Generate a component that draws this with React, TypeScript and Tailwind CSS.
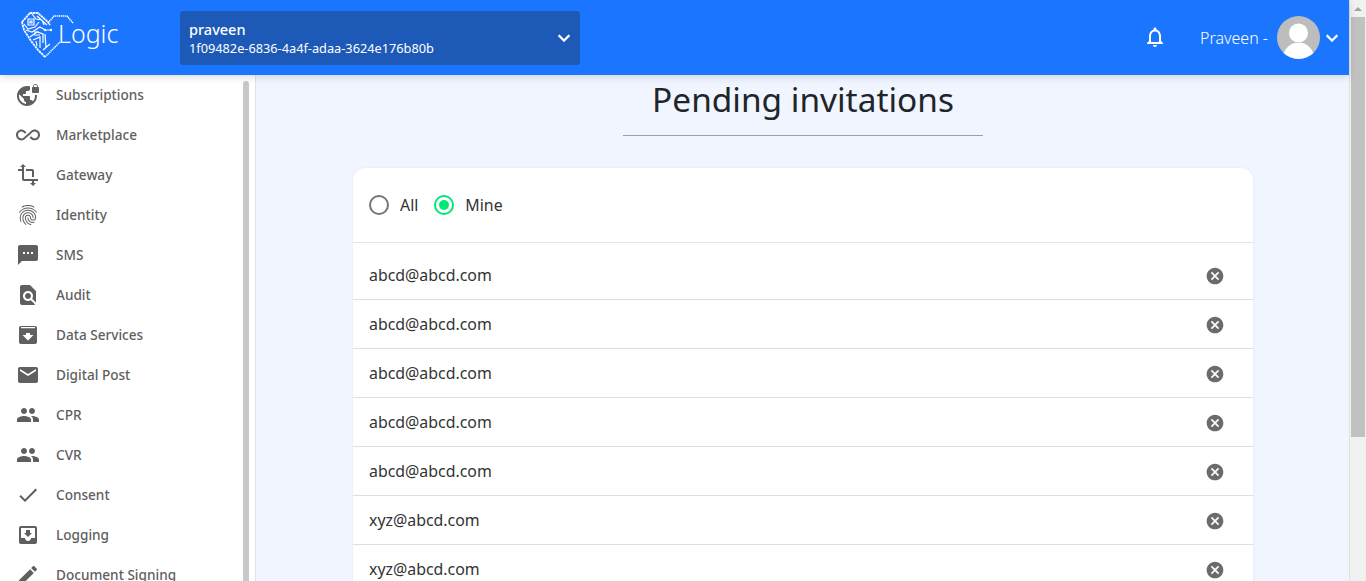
import React from 'react';

const icons = {
  vpn: 'M22 4v-.5C22 2.12 20.88 1 19.5 1S17 2.12 17 3.5V4c-.55 0-1 .45-1 1v4c0 .55.45 1 1 1h5c.55 0 1-.45 1-1V5c0-.55-.45-1-1-1zm-.8 0h-3.4v-.5c0-.94.76-1.7 1.7-1.7s1.7.76 1.7 1.7V4zm-2.28 8c.04.33.08.66.08 1 0 2.08-.8 3.97-2.1 5.39-.26-.81-1-1.39-1.9-1.39h-1v-3c0-.55-.45-1-1-1H7v-2h2c.55 0 1-.45 1-1V8h2c1.1 0 2-.9 2-2V3.46c-.95-.3-1.95-.46-3-.46C5.48 3 1 7.48 1 13s4.48 10 10 10 10-4.48 10-10c0-.34-.02-.67-.05-1h-2.03zM10 20.93c-3.95-.49-7-3.85-7-7.93 0-.62.08-1.21.21-1.79L8 16v1c0 1.1.9 2 2 2v1.93z',
  infinity: 'M18.6 6.62c-1.44 0-2.8.56-3.77 1.53L12 10.66 10.48 12h.01L7.8 14.39c-.64.64-1.49.99-2.4.99-1.87 0-3.39-1.51-3.39-3.38S3.53 8.62 5.4 8.62c.91 0 1.76.35 2.44 1.03l1.13 1 1.51-1.34L9.22 8.2C8.2 7.18 6.84 6.62 5.4 6.62 2.42 6.62 0 9.04 0 12s2.42 5.38 5.4 5.38c1.44 0 2.8-.56 3.77-1.53l2.83-2.5.01.01L13.52 12h-.01l2.69-2.39c.64-.64 1.49-.99 2.4-.99 1.87 0 3.39 1.51 3.39 3.38s-1.52 3.38-3.39 3.38c-.9 0-1.76-.35-2.44-1.03l-1.14-1.01-1.51 1.34 1.27 1.12c1.02 1.01 2.37 1.57 3.82 1.57 2.98 0 5.4-2.41 5.4-5.38s-2.42-5.37-5.4-5.37z',
  transform: 'M22 18v-2H8V4h2L7 1 4 4h2v2H2v2h4v8c0 1.1.9 2 2 2h8v2h-2l3 3 3-3h-2v-2h4zM10 8h6v6h2V8c0-1.1-.9-2-2-2h-6v2z',
  fingerprint: 'M17.81 4.47c-.08 0-.16-.02-.23-.06C15.66 3.42 14 3 12.01 3c-1.98 0-3.86.47-5.57 1.41-.24.13-.54.04-.68-.2-.13-.24-.04-.55.2-.68C7.82 2.52 9.86 2 12.01 2c2.13 0 3.99.47 6.03 1.52.25.13.34.43.21.67-.09.18-.26.28-.44.28zM3.5 9.72c-.1 0-.2-.03-.29-.09-.23-.16-.28-.47-.12-.7.99-1.4 2.25-2.5 3.75-3.27C9.98 4.04 14 4.03 17.15 5.65c1.5.77 2.76 1.86 3.75 3.25.16.22.11.54-.12.7-.23.16-.54.11-.7-.12-.9-1.26-2.04-2.25-3.39-2.94-2.87-1.47-6.54-1.47-9.4.01-1.36.7-2.5 1.7-3.4 2.96-.08.14-.23.21-.39.21zm6.25 12.07c-.13 0-.26-.05-.35-.15-.87-.87-1.34-1.43-2.01-2.64-.69-1.23-1.05-2.73-1.05-4.34 0-2.97 2.54-5.39 5.66-5.39s5.66 2.42 5.66 5.39c0 .28-.22.5-.5.5s-.5-.22-.5-.5c0-2.42-2.09-4.39-4.66-4.39-2.57 0-4.66 1.97-4.66 4.39 0 1.44.32 2.77.93 3.85.64 1.15 1.08 1.64 1.85 2.42.19.2.19.51 0 .71-.11.1-.24.15-.37.15zm7.17-1.85c-1.19 0-2.24-.3-3.1-.89-1.49-1.01-2.38-2.65-2.38-4.39 0-.28.22-.5.5-.5s.5.22.5.5c0 1.41.72 2.74 1.94 3.56.71.48 1.54.71 2.54.71.24 0 .64-.03 1.04-.1.27-.05.53.13.58.41.05.27-.13.53-.41.58-.57.11-1.07.12-1.21.12zM14.91 22c-.04 0-.09-.01-.13-.02-1.59-.44-2.63-1.03-3.72-2.1-1.4-1.39-2.17-3.24-2.17-5.22 0-1.62 1.38-2.94 3.08-2.94 1.7 0 3.08 1.32 3.08 2.94 0 1.07.93 1.94 2.08 1.94s2.08-.87 2.08-1.94c0-3.77-3.25-6.83-7.25-6.83-2.84 0-5.44 1.58-6.61 4.03-.39.81-.59 1.76-.59 2.8 0 .78.07 2.01.67 3.61.1.26-.03.55-.29.64-.26.1-.55-.04-.64-.29-.49-1.31-.73-2.61-.73-3.96 0-1.2.23-2.29.68-3.24 1.33-2.79 4.28-4.6 7.51-4.6 4.55 0 8.25 3.51 8.25 7.83 0 1.62-1.38 2.94-3.08 2.94s-3.08-1.32-3.08-2.94c0-1.07-.93-1.94-2.08-1.94s-2.08.87-2.08 1.94c0 1.71.66 3.31 1.87 4.51.95.94 1.86 1.46 3.27 1.85.27.07.42.35.35.61-.05.23-.26.38-.47.38z',
  sms: 'M20 2H4c-1.1 0-1.99.9-1.99 2L2 22l4-4h14c1.1 0 2-.9 2-2V4c0-1.1-.9-2-2-2zM9 11H7V9h2v2zm4 0h-2V9h2v2zm4 0h-2V9h2v2z',
  audit: 'M20 19.59V8l-6-6H6c-1.1 0-1.99.9-1.99 2L4 20c0 1.1.89 2 1.99 2H18c.45 0 .85-.15 1.19-.4l-4.43-4.43c-.8.52-1.74.83-2.76.83-2.76 0-5-2.24-5-5s2.24-5 5-5 5 2.24 5 5c0 1.02-.31 1.96-.83 2.75L20 19.59zM9 13c0 1.66 1.34 3 3 3s3-1.34 3-3-1.34-3-3-3-3 1.34-3 3z',
  archive: 'M5 3h14c1.1 0 2 .9 2 2v14c0 1.1-.9 2-2 2H5c-1.1 0-2-.9-2-2V5c0-1.1.9-2 2-2zm0 1v1.2h14V4H5zm7 13.5l5.5-5.5H14v-2h-4v2H6.500L12 17.500z',
  email: 'M20 4H4c-1.1 0-1.99.9-1.99 2L2 18c0 1.1.9 2 2 2h16c1.1 0 2-.9 2-2V6c0-1.1-.9-2-2-2zm0 4l-8 5-8-5V6l8 5 8-5v2z',
  people: 'M16 11c1.66 0 2.99-1.34 2.99-3S17.66 5 16 5c-1.66 0-3 1.34-3 3s1.34 3 3 3zm-8 0c1.66 0 2.99-1.34 2.99-3S9.66 5 8 5C6.34 5 5 6.34 5 8s1.34 3 3 3zm0 2c-2.33 0-7 1.17-7 3.5V19h14v-2.5c0-2.33-4.67-3.5-7-3.5zm8 0c-.29 0-.62.02-.97.05 1.16.84 1.97 1.97 1.97 3.45V19h6v-2.5c0-2.33-4.67-3.5-7-3.5z',
  done: 'M9 16.2L4.8 12l-1.4 1.4L9 19 21 7l-1.4-1.4L9 16.2z',
  inbox: 'M19 3H4.99c-1.11 0-1.98.9-1.98 2L3 19c0 1.1.88 2 1.99 2H19c1.1 0 2-.9 2-2V5c0-1.1-.9-2-2-2zm0 12h-4c0 1.66-1.35 3-3 3s-3-1.34-3-3H4.99V5H19v10zm-3-5h-2V7h-4v3H8l4 4 4-4z',
  edit: 'M3 17.25V21h3.75L17.81 9.94l-3.75-3.75L3 17.25zM20.71 7.04c.39-.39.39-1.02 0-1.41l-2.34-2.34c-.39-.39-1.02-.39-1.41 0l-1.83 1.83 3.75 3.75 1.83-1.83z',
  cancel: 'M12 2C6.47 2 2 6.47 2 12s4.47 10 10 10 10-4.47 10-10S17.53 2 12 2zm5 13.59L15.59 17 12 13.41 8.41 17 7 15.59 10.59 12 7 8.41 8.41 7 12 10.59 15.59 7 17 8.41 13.41 12 17 15.59z',
  bell: 'M12 22c1.1 0 2-.9 2-2h-4c0 1.1.9 2 2 2zm6-6v-5c0-3.07-1.63-5.64-4.5-6.32V4c0-.83-.67-1.5-1.5-1.5s-1.5.67-1.5 1.5v.68C7.64 5.36 6 7.92 6 11v5l-2 2v1h16v-1l-2-2zm-2 1H8v-6c0-2.48 1.51-4.5 4-4.5s4 2.02 4 4.5v6z',
};

const menu = [
  { label: 'Subscriptions', icon: icons.vpn },
  { label: 'Marketplace', icon: icons.infinity },
  { label: 'Gateway', icon: icons.transform },
  { label: 'Identity', icon: icons.fingerprint },
  { label: 'SMS', icon: icons.sms },
  { label: 'Audit', icon: icons.audit },
  { label: 'Data Services', icon: icons.archive },
  { label: 'Digital Post', icon: icons.email },
  { label: 'CPR', icon: icons.people },
  { label: 'CVR', icon: icons.people },
  { label: 'Consent', icon: icons.done },
  { label: 'Logging', icon: icons.inbox },
  { label: 'Document Signing', icon: icons.edit },
];

const invitations = [
  'abcd@abcd.com',
  'abcd@abcd.com',
  'abcd@abcd.com',
  'abcd@abcd.com',
  'abcd@abcd.com',
  'xyz@abcd.com',
  'xyz@abcd.com',
];

const Chevron = () => (
  <svg className="w-[24px] h-[24px] shrink-0" viewBox="0 0 24 24" fill="currentColor">
    <path d="M7.41 8.59L12 13.17l4.59-4.58L18 10l-6 6-6-6 1.41-1.41z" stroke="currentColor" strokeWidth="0.3" />
  </svg>
);

// heart shaped circuit logo, the right half is only a dotted outline
const Logo = () => (
  <svg className="w-[56px] h-[50px] shrink-0 mb-[5px]" viewBox="0 0 56 50" fill="none" stroke="white">
    <path d="M28 13L34 6H47L53 13" strokeWidth="1.5" strokeDasharray="1.4 0.6" />
    <path d="M25 47L40 32" strokeWidth="1.5" strokeDasharray="1.4 0.6" />
    <path d="M2 12L10 3H18L28 12L30 15" strokeWidth="1.8" strokeDasharray="2.5 0.5" />
    <path d="M2 12L4 20L11 31L18 40L25 47" strokeWidth="1.8" strokeDasharray="2.5 0.6" />
    <g strokeWidth="1.2">
      <path d="M8 9H14V15H8ZM10 11H12V13H10Z" />
      <path d="M12 4L16 9L22 10L24 15M17 6L27 15" />
      <path d="M4 14L8 19L15 17L19 12M6 20L12 22L20 17L25 20L31 20" />
      <path d="M10 27L17 22L23 24L23 33M13 30L20 27L20 38M17 36L16 31M25 24L26 38M23 40L30 34" />
      <path d="M14 22H19M14 25H20" />
    </g>
    <circle cx="31" cy="20" r="1.2" fill="white" stroke="none" />
    <circle cx="25" cy="20" r="1.2" fill="white" stroke="none" />
  </svg>
);

export default function App() {
  return (
    <div className="flex h-screen overflow-hidden bg-[#f0f5ff] font-['Noto_Sans','Open_Sans',sans-serif]">
      <div className="flex-1 min-w-0 flex flex-col">
        {/* Top bar */}
        <header className="h-[75px] shrink-0 bg-[#1a75ff] flex items-center text-white relative z-10 shadow-[0_2px_8px_rgba(0,0,0,0.15)]">
          <div className="w-[180px] shrink-0 pl-[20px] flex items-center">
            <Logo />
            <span className="text-[25px] font-light -ml-[18px] mb-[8px] leading-none">Logic</span>
          </div>
          <div className="w-[400px] h-[54px] bg-[#1d5ab8] rounded-[3px] pl-[9px] pr-[4px] flex items-center justify-between">
            <div className="mt-[2px]">
              <div className="text-[14.5px] font-medium leading-[19px]">praveen</div>
              <div className="text-[12.75px] leading-[17px] mt-[1px]">1f09482e-6836-4a4f-adaa-3624e176b80b</div>
            </div>
            <Chevron />
          </div>
          <div className="ml-auto flex items-center pr-[5px]">
            <svg className="w-[24px] h-[24px] mr-[33px] -mt-[1px]" viewBox="0 0 24 24" fill="white">
              <path d={icons.bell} />
            </svg>
            <span className="text-[16px] font-light mr-[9px]">Praveen -</span>
            <div className="w-[43px] h-[43px] rounded-full bg-[#bdbdbd] overflow-hidden">
              <svg viewBox="0 0 43 43" fill="white">
                <circle cx="21.5" cy="17" r="9.5" />
                <path d="M6 41c1-8 6-12 11-14h9c5 2 10 6 11 14v2H6z" />
              </svg>
            </div>
            <Chevron />
          </div>
        </header>

        <div className="flex-1 min-h-0 flex">
          {/* Sidebar */}
          <aside className="w-[256px] shrink-0 bg-white border-r border-[#dfe3ea] relative overflow-hidden">
            <nav>
              {menu.map((item) => (
                <div key={item.label} className="h-[40px] flex items-center pl-[16px] text-[#5f5f5f]">
                  <svg className="w-[24px] h-[24px] shrink-0 mr-[16px]" viewBox="0 0 24 24" fill="#5f5f5f">
                    <path d={item.icon} />
                  </svg>
                  <span className="text-[13.6px] font-medium whitespace-nowrap">{item.label}</span>
                </div>
              ))}
            </nav>
            <div className="absolute left-[243px] top-[6px] bottom-0 w-[6px] rounded-t-[3px] bg-[#c8c8c8]" />
          </aside>

          {/* Main content */}
          <main className="flex-1 min-w-0 overflow-hidden flex flex-col items-center">
            <h1 className="text-[33.4px] text-[#212529] leading-[48px] ml-[1px] w-[360px] pb-[12px] text-center border-b border-[#9aa0a6]">
              Pending invitations
            </h1>
            <section className="w-[900px] mt-[32px] ml-[1px] bg-white rounded-t-[12px] shadow-[0_0_3px_rgba(0,0,0,0.06)]">
              <div className="h-[75px] px-[16px] flex items-center border-b border-[#e5e5e5] text-[15.9px] text-[#333333]">
                <span className="w-[20px] h-[20px] rounded-full border-2 border-[#757575] mr-[11px]" />
                <span className="mr-[16px] mt-[2px]">All</span>
                <span className="w-[20px] h-[20px] rounded-full border-2 border-[#00e676] mr-[11px] flex items-center justify-center">
                  <span className="w-[10px] h-[10px] rounded-full bg-[#00e676]" />
                </span>
                <span className="mt-[2px]">Mine</span>
              </div>
              <div className="pt-[8px]">
                {invitations.map((email, i) => (
                  <div key={i} className="h-[49px] pl-[16px] pr-[28px] flex items-center justify-between border-b border-[#e0e0e0] text-[15.9px] text-[#333333]">
                    <span className="mt-[2px]">{email}</span>
                    <svg className="w-[20px] h-[20px] mt-[1px]" viewBox="0 0 24 24" fill="#6b6b6b">
                      <path d={icons.cancel} />
                    </svg>
                  </div>
                ))}
              </div>
            </section>
          </main>
        </div>
      </div>

      {/* Window scrollbar */}
      <div className="w-[17px] shrink-0 bg-[#f1f1f1] flex flex-col border-l border-[#e0e0e0]">
        <div className="h-[17px] flex items-center justify-center">
          <div className="w-0 h-0 border-x-[4px] border-x-transparent border-b-[4px] border-b-[#a3a3a3]" />
        </div>
        <div className="ml-[1px] mr-[1px] h-[420px] bg-[#c1c1c1]" />
      </div>
    </div>
  );
}
